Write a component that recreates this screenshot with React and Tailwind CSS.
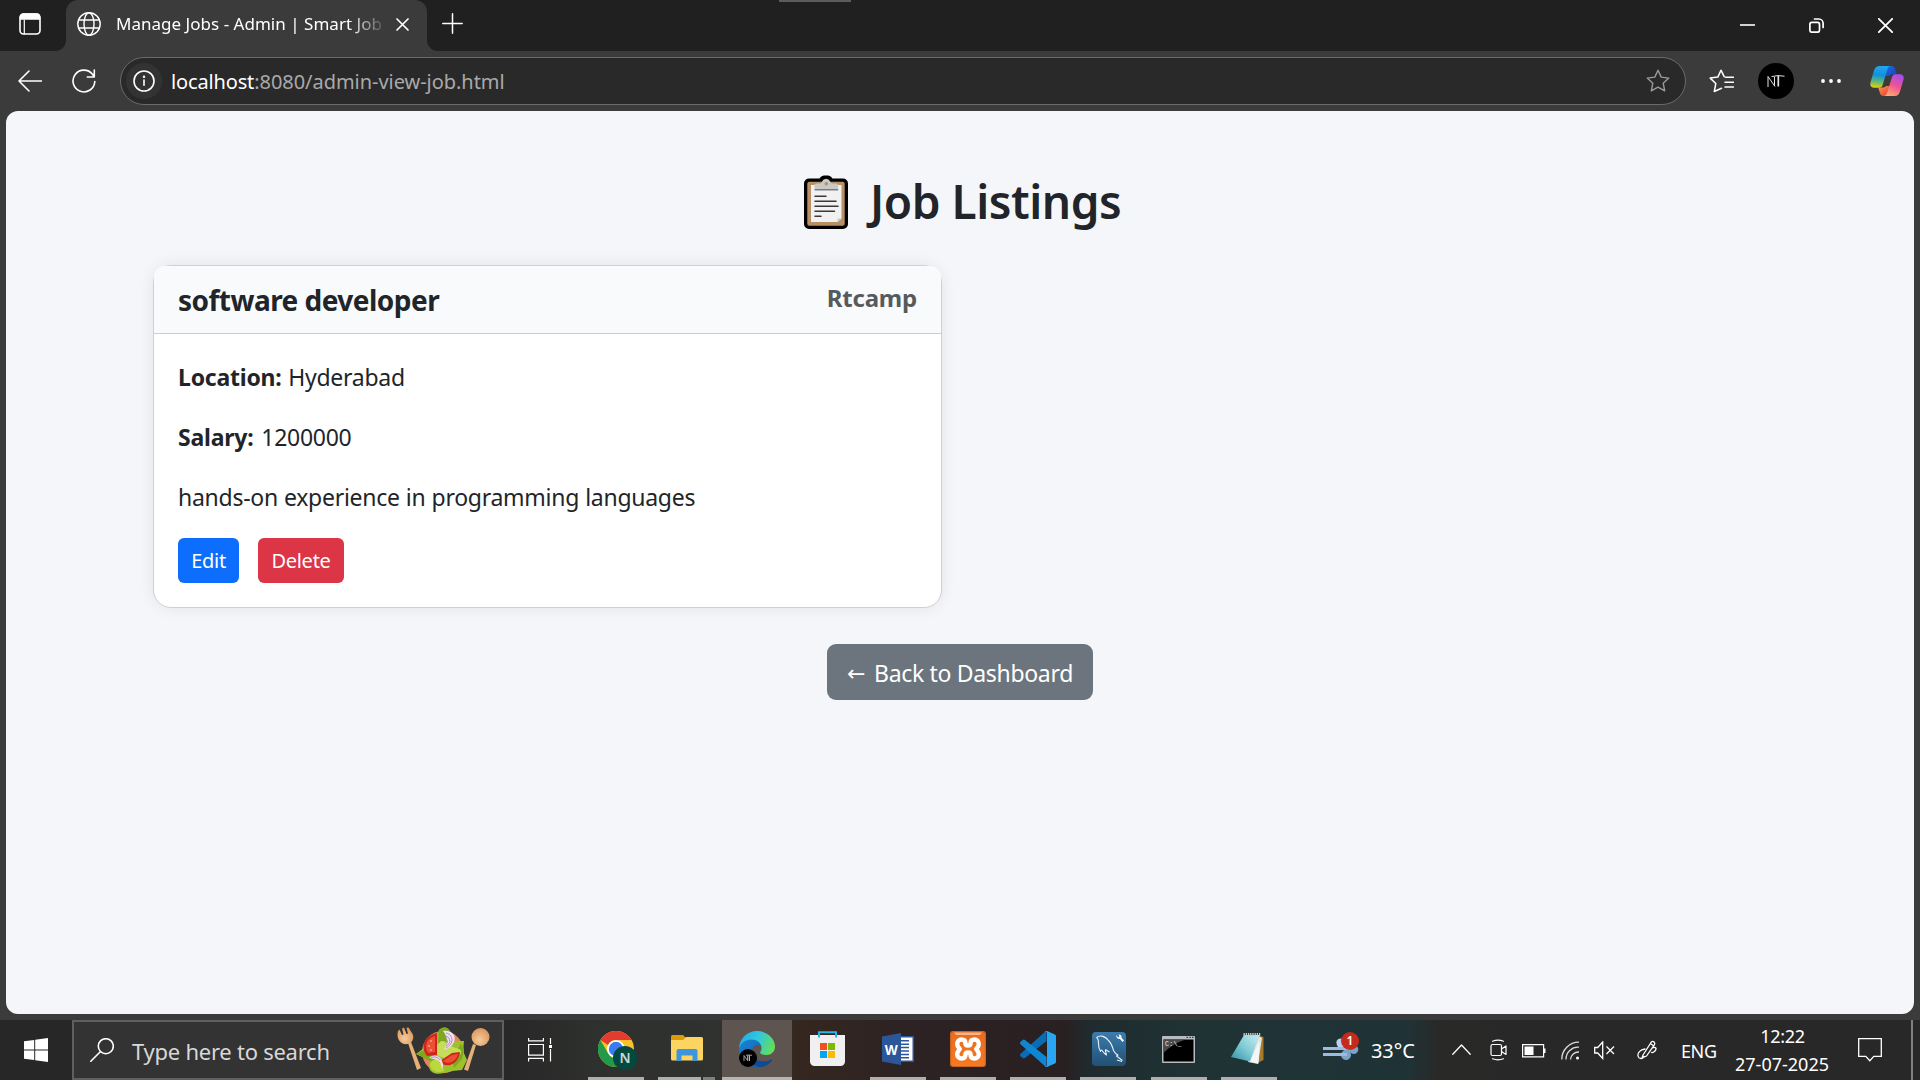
import React from 'react';

const line = { fill: 'none', stroke: 'currentColor', strokeLinecap: 'round', strokeLinejoin: 'round' };

function TabStrip() {
  return (
    <div className="flex h-[51px] shrink-0 bg-[#202020] text-white">
      <div className="flex w-[66px] rounded-br-[10px] bg-[#202020] pl-[19px] pt-[13px]">
        <svg width="22" height="22" viewBox="0 0 22 22" {...line} strokeWidth="1.6">
          <rect x="1" y="1" width="20" height="20" rx="3.5" />
          <path d="M1.5 6V4a3 3 0 0 1 3-3h13a3 3 0 0 1 3 3v2z" fill="currentColor" />
          <path d="M5.3 7v14" strokeWidth="1.2" />
        </svg>
      </div>
      <div className="relative flex w-[361px] items-start rounded-t-[12px] bg-[#3b3b3b] pl-[11px]">
        <span className="absolute bottom-0 -left-[10px] h-[10px] w-[10px] bg-[radial-gradient(circle_at_0_0,#202020_9.5px,#3b3b3b_10px)]" />
        <span className="absolute bottom-0 -right-[10px] h-[10px] w-[10px] bg-[radial-gradient(circle_at_100%_0,#202020_9.5px,#3b3b3b_10px)]" />
        <svg className="mt-[12px]" width="24" height="24" viewBox="0 0 24 24" {...line} strokeWidth="1.4">
          <circle cx="12" cy="12" r="11.2" />
          <ellipse cx="12" cy="12" rx="5" ry="11.2" />
          <path d="M2 8h20M2 16h20" />
        </svg>
        <div className="ml-[15px] mt-[10px] w-[270px] shrink-0 whitespace-nowrap text-[17px] leading-[27px] tracking-[0.02px] [mask-image:linear-gradient(to_right,#000_232px,transparent_272px)]">
          Manage Jobs - Admin | Smart Job
        </div>
        <svg className="ml-[10px] mt-[18px] shrink-0" width="13" height="13" viewBox="0 0 13 13" {...line} strokeWidth="1.7">
          <path d="M1 1l11 11M12 1L1 12" />
        </svg>
      </div>
      <svg className="ml-[15px] mt-[13px]" width="21" height="21" viewBox="0 0 21 21" {...line} strokeWidth="1.5">
        <path d="M10.5 .8v19.4M.8 10.5h19.4" />
      </svg>
      <div className="ml-[316px] h-[2px] w-[72px] bg-[#5c5c5c]" />
      <div className="ml-auto flex pr-[27px] pt-[18px]">
        <svg width="15" height="15" viewBox="0 0 15 15" {...line} strokeWidth="1.6"><path d="M0 7h15" strokeLinecap="butt" /></svg>
        <svg className="ml-[54px]" width="15" height="15" viewBox="0 0 15 15" {...line} strokeWidth="1.7">
          <rect x=".9" y="4.4" width="9.6" height="9.8" rx="2" />
          <path d="M5.5 1h4.3a4.3 4.3 0 0 1 4.3 4.3v4.2" />
        </svg>
        <svg className="ml-[54px]" width="15" height="15" viewBox="0 0 15 15" {...line} strokeWidth="1.8"><path d="M.8.8l13.4 13.4M14.2.8L.8 14.2" /></svg>
      </div>
    </div>
  );
}

const star = 'M12 1.2l3.2 6.9 7.6 1-5.6 5.1 1.5 7.7-6.7-3.8-6.7 3.8 1.5-7.7L1.2 9.1l7.6-1z';

function Copilot() {
  return (
    <svg className="ml-[29px]" width="34" height="30" viewBox="0 0 34 30">
      <defs>
        <linearGradient id="cpA" x1=".3" y1="0" x2=".2" y2="1"><stop offset="0" stopColor="#22a5f2" /><stop offset=".4" stopColor="#1190dc" /><stop offset=".7" stopColor="#5fb87a" /><stop offset="1" stopColor="#f3d000" /></linearGradient>
        <linearGradient id="cpB" x1=".7" y1="0" x2=".3" y2="1"><stop offset="0" stopColor="#a44df0" /><stop offset=".5" stopColor="#ee5390" /><stop offset="1" stopColor="#ffab70" /></linearGradient>
        <linearGradient id="cpC" x1="0" y1="0" x2="1" y2="1"><stop offset="0" stopColor="#1d6fe0" /><stop offset="1" stopColor="#1a3fc0" /></linearGradient>
        <linearGradient id="cpD" x1="0" y1="0" x2="1" y2="1"><stop offset="0" stopColor="#ff9a45" /><stop offset="1" stopColor="#e5323a" /></linearGradient>
      </defs>
      <path d="M17 0h4.500c2 0 3 1 3.600 3l1.700 5.500h-3.600c-2 0-3.200.3-4.200 1.500H15z" fill="url(#cpC)" />
      <path d="M18 30h-4.500c-2 0-3-1-3.600-3L8.200 21.500h3.600c2 0 3.200-.3 4.200-1.500h4z" fill="url(#cpD)" />
      <path d="M9.500 0H21c-2.200 0-3.100 1.500-3.700 3.500l-4.500 15c-.6 2.200-1.800 3.300-4 3.300H4.500C.8 21.800-.3 19.500.5 16.500L4 4.500C4.900 1.500 6.600 0 9.500 0z" fill="url(#cpA)" />
      <path d="M24.500 30H13.500c2.200 0 3.100-1.500 3.700-3.500l4.500-14.500c.6-2.200 1.800-3.800 4-3.800h3.800c3.700 0 4.800 2.300 4 5.300l-3.500 12C29.100 28.500 27.400 30 24.500 30z" fill="url(#cpB)" />
    </svg>
  );
}

function Toolbar() {
  return (
    <div className="flex h-[60px] shrink-0 items-center text-white">
      <svg className="ml-[18px]" width="24" height="22" viewBox="0 0 24 22" {...line} strokeWidth="1.6">
        <path d="M23.5 11H1M11 1L1 11l10 10" />
      </svg>
      <svg className="ml-[30px]" width="24" height="24" viewBox="0 0 24 24" {...line} strokeWidth="1.6">
        <path d="M22.8 12.5A10.9 10.9 0 1 1 20.5 5.3L22 7.5M22.3 1v7h-7" />
      </svg>
      <div className="ml-[24px] flex h-[48px] w-[1566px] items-center rounded-full border border-[#6a6a6a] bg-[#292929] pl-[5px] pr-[15px]">
        <div className="flex h-9 w-9 items-center justify-center rounded-full bg-[#333333]">
          <svg width="22" height="22" viewBox="0 0 22 22" {...line} strokeWidth="1.6">
            <circle cx="11" cy="11" r="10" />
            <path d="M11 10v5.3" /><circle cx="11" cy="6.8" r=".5" />
          </svg>
        </div>
        <div className="ml-[9px] flex-1 whitespace-nowrap pt-[2px] text-[20px] leading-[30px] tracking-[-0.04px] text-[#a9a9a9]">
          <span className="tracking-[-0.15px] text-white">localhost</span>:8080/admin-view-job.html
        </div>
        <svg className="text-[#9a9a9a]" width="24" height="24" viewBox="0 0 24 24" {...line} strokeWidth="1.4"><path d={star} /></svg>
      </div>
      <svg className="ml-[23px]" width="25" height="24" viewBox="0 0 25 24" {...line} strokeWidth="1.5">
        <path d="M12.5 19.3l-7.2 3.2 1.5-8L1.2 9.1l7.6-1L12 1.2l3.2 6.5M16.5 8.3h8M16 13.2h8.5M16 18h8.5" />
      </svg>
      <div className="ml-[24px] flex h-9 w-9 items-center justify-center rounded-full bg-black">
        <svg width="20" height="14" viewBox="0 0 20 14" fill="none" stroke="#e2e2e2" strokeWidth="1">
          <path d="M2 13V2.500M2 2.500l7 10M8.500 12V3M5.500 2.600Q12 .8 18.500 2.200" />
          <path d="M12.300 2v10.500" strokeWidth="1.700" />
        </svg>
      </div>
      <svg className="ml-[27px]" width="20" height="4" viewBox="0 0 20 4" fill="currentColor">
        <circle cx="2" cy="2" r="1.9" /><circle cx="10" cy="2" r="1.9" /><circle cx="18" cy="2" r="1.9" />
      </svg>
      <Copilot />
    </div>
  );
}

function Clipboard() {
  return (
    <svg width="44" height="54" viewBox="0 0 44 54">
      <path d="M5 3.500H15.500C17 1 19 .5 22 .5s5 .5 6.500 3H39a5 5 0 0 1 5 5V49a5 5 0 0 1-5 5H5a5 5 0 0 1-5-5V8.500a5 5 0 0 1 5-5z" fill="#000" />
      <rect x="3.300" y="6.800" width="37.400" height="44" rx="2" fill="#b98f66" />
      <path d="M7 10h30.500v33.500L33.500 47H7z" fill="#f1f1f1" />
      <path d="M37.500 43.500h-4V47z" fill="#c9c9c9" />
      <path d="M10.500 14V10q0-1.500 2-1.500H16c1 0 1.500-1 2-2a4.500 4.500 0 0 1 8.200 0c.5 1 1 2 2 2h4q2 0 2 1.500v4z" fill="#c8c8c8" />
      <path d="M10.500 14h23.700v1.500H10.500z" fill="#7c7c7c" />
      <circle cx="22.300" cy="8.800" r="1.800" fill="#b98f66" />
      <path d="M11 21.200h11M11 26.200h21M11 31.300h23M11 36.300h19.500M11 41.300h6" stroke="#3c373b" strokeWidth="1.500" strokeLinecap="round" />
    </svg>
  );
}

function JobCard() {
  return (
    <div className="ml-[147px] mt-[29px] h-[343px] w-[789px] shrink-0 rounded-[18px] border border-[#cfd0d2] bg-white shadow-[0_0_15px_rgba(0,0,0,0.08)]">
      <div className="flex h-[68px] justify-between rounded-t-[10px] border-b border-[#cbcdd0] bg-[#f8fafc] px-6">
        <h5 className="mt-[16px] text-[28px] font-bold leading-[36px] tracking-[-0.52px]">software developer</h5>
        <span className="mt-[14px] text-[24px] font-bold leading-[36px] tracking-[-0.2px] text-[#565a5e]">Rtcamp</span>
      </div>
      <div className="px-6 pt-[25px] text-[23px] leading-[36px] tracking-[-0.27px]">
        <p className="mb-6"><b className="mr-px font-bold tracking-[-0.22px]">Location:</b> Hyderabad</p>
        <p className="mb-6"><b className="mr-[2px] font-bold tracking-[-0.2px]">Salary:</b> 1200000</p>
        <p className="mb-[23px] [word-spacing:0.4px]">hands-on experience in programming languages</p>
        <div className="flex gap-[19px] text-[20px] leading-[45px] text-white">
          <button className="h-[45px] w-[61px] rounded-[6px] bg-[#0d6efd]">Edit</button>
          <button className="h-[45px] w-[86px] rounded-[6px] bg-[#dc3545]">Delete</button>
        </div>
      </div>
    </div>
  );
}

function Page() {
  return (
    <main className="mx-[6px] flex h-[903px] shrink-0 flex-col rounded-[12px] bg-[#f4f6fa] text-[#212529]">
      <div className="mt-[55px] flex h-[70px] items-center pl-[798px]">
        <div className="mt-px"><Clipboard /></div>
        <h2 className="ml-[22px] whitespace-nowrap text-[46px] font-semibold leading-[58px] tracking-[-0.45px]">Job Listings</h2>
      </div>
      <JobCard />
      <a className="mt-9 flex h-[56px] w-[266px] items-center self-center rounded-[9px] bg-[#6c757d] pl-[20px] pt-px text-[23px] tracking-[-0.27px] text-white">
        <span className="w-[27px] pt-[3px] font-['DejaVu_Sans',sans-serif] text-[22px] leading-[30px]">←</span>
        <span className="whitespace-nowrap leading-[36px] tracking-[-0.32px]">Back to Dashboard</span>
      </a>
    </main>
  );
}

function Salad() {
  return (
    <svg width="93" height="48" viewBox="0 0 93 48">
      <defs>
        <radialGradient id="wood" cx=".45" cy=".65" r=".6"><stop offset="0" stopColor="#f3cb9b" /><stop offset="1" stopColor="#dd9a61" /></radialGradient>
      </defs>
      <path d="M11 16l3-1 10 26-4 2z" fill="#e8b078" />
      <path d="M1 4l1.500-1.500L5 8l1.500-.5L5 1.500l2-1 2.500 6.500 1.500-.5L9.500.8l2-.3 2.500 4c3 4 3 7 .5 10.500-3 3-8 3-11 0S0 8 1 4z" fill="url(#wood)" />
      <path d="M76 17l3 1-8 26-4-1.500z" fill="#e8b078" />
      <circle cx="83.500" cy="10" r="9" fill="url(#wood)" />
      <ellipse cx="46" cy="25" rx="21" ry="21" fill="#e0875a" />
      <path d="M42 3c5-5 11-2 12 4v7h13l-1 10 4 9-5 10-10 1-8 2c-8 2-14 0-15-6l1-7-14-6 8-6 3-10 10-2z" fill="#9dc12c" />
      <path d="M42 3c5-5 11-2 12 4l-6 14-7-2zM19 27l12-6 12 10-10 3zM55 30l9-13 3 6-2 9-8 9z" fill="#7da81f" />
      <path d="M44 14c7 0 9 6 15 7s7 5 2 8-20 3-22-3 2-9 5-12z" fill="#c5dd58" />
      <path d="M33 38c1-5 6-7 11-5l3 11c-7 2-12 1-14-6z" fill="#bbd83c" />
      <path d="M40 6c-13 3-17 14-10 23l10-1z" fill="#cf2417" /><path d="M38 9c-9 3-11 10-7 17l7-1z" fill="#ec4f38" />
      <path d="M34 13v2M32 18v2M34 22v2" stroke="#ffd2a0" strokeWidth="1" />
      <path d="M43 34c4 8 18 5 20-9l-8 1z" fill="#cf2417" /><path d="M46 34c5 4 13 1 15-7l-6 1z" fill="#ec4f38" />
      <path d="M46 4c15-2 16 15 1 19 4-6 4-13-1-19z" fill="#efe2f2" />
      <path d="M49 6c8 2 8 11 0 15M49 9c5 2 5 8 0 10M49 12c2 1 2 4 0 5" fill="none" stroke="#a77ab2" strokeWidth=".9" />
      <path d="M32 31c4-4 10-3 12 1 2 3 3 7 1 10l-2-7c-3-3-7-3-11-4z" fill="#eadbf0" />
      <path d="M34 31c3-2 7-1 9 2" fill="none" stroke="#a77ab2" strokeWidth=".8" />
    </svg>
  );
}

function Chrome() {
  return (
    <svg width="40" height="40" viewBox="0 0 40 40" className="ml-[4px] mt-[4px]">
      <circle cx="18" cy="18" r="18" fill="#fbc02d" />
      <path d="M2.400 9A18 18 0 0 1 33.600 9H18a9 9 0 0 0-8 5z" fill="#e33b2e" />
      <path d="M2.400 9A18 18 0 0 0 18 36l8-13.500a9 9 0 0 1-15.800 0z" fill="#229a4a" />
      <circle cx="18" cy="18" r="9" fill="#fff" /><circle cx="18" cy="18" r="7.200" fill="#3a7cf0" />
      <circle cx="27" cy="27" r="12" fill="#04493f" />
      <text x="27" y="32" textAnchor="middle" fontSize="14" fontWeight="600" fill="#c7dbd6" fontFamily="Noto Sans, sans-serif">N</text>
    </svg>
  );
}

function Explorer() {
  return (
    <svg width="32" height="28" viewBox="0 0 32 28" className="mt-px">
      <path d="M0 1.500Q0 0 1.500 0H12l3 3-3 3H0z" fill="#dc9b07" />
      <path d="M0 5h12l3-3h15.500Q32 2 32 3.500V24q0 1.500-1.500 1.500h-29Q0 25.500 0 24z" fill="#fcd462" />
      <path d="M5.500 26V16q0-2 2-2h17q2 0 2 2v10h-5v-5.500h-11V26z" fill="#3d95dc" />
    </svg>
  );
}

function Edge() {
  return (
    <svg width="36" height="37" viewBox="0 0 36 37" className="mt-px">
      <defs>
        <linearGradient id="edA" x1="0" y1=".2" x2="1" y2=".5"><stop offset="0" stopColor="#2aa7e4" /><stop offset=".5" stopColor="#2fc7df" /><stop offset="1" stopColor="#62de5b" /></linearGradient>
        <linearGradient id="edB" x1="0" y1="0" x2="1" y2="1"><stop offset="0" stopColor="#1a86d8" /><stop offset="1" stopColor="#0f4f9e" /></linearGradient>
      </defs>
      <path d="M0 18C0 8 8 0 18 0s18 7.500 18 15.500c0 5.500-4 8.500-8.500 8.500-4 0-6.500-1.300-6.500-2.500 0-.8 1.500-1.500 1.500-4C22.500 13 18 10 13 10 6 10 1.500 14 0 18z" fill="url(#edA)" />
      <path d="M0 18c1.500-6 6.500-9.500 12-9.500 6 0 10 3.500 10.500 7.500-1-1.500-2.500-2-4.500-2-3 0-5 3-5 6.500 0 7 6 10 12 10 3.500 0 6-1.500 7-2 1 0 1.200.700.800 1.200A18 18 0 0 1 18 36C8 36 0 28 0 18z" fill="url(#edB)" />
      <path d="M13 20.500c0 7 6 10 12 10 3.500 0 6-1.500 7-2 1 0 1.200.700.800 1.200A17 17 0 0 1 20 36c-6-2-9-8-7-15.500z" fill="#114a94" />
      <circle cx="9" cy="27" r="9" fill="#000" />
      <path d="M5 30v-5.500l3.500 5V24.500M7 24.300q3-.6 6 0" fill="none" stroke="#ddd" strokeWidth=".7" />
      <path d="M10.300 24.300V30" stroke="#ddd" strokeWidth="1.100" />
    </svg>
  );
}

function Store() {
  return (
    <svg width="35" height="35" viewBox="0 0 35 35">
      <path d="M9 8V1.200h17V8" fill="none" stroke="#2bb4ea" strokeWidth="2" />
      <path d="M0 4h35v26.500a4.500 4.500 0 0 1-4.500 4.500h-26A4.500 4.500 0 0 1 0 30.500z" fill="#f0f0f1" />
      <path d="M9 6.500V4M26 6.500V4" stroke="#2bb4ea" strokeWidth="2" />
      <path d="M10 12h7v7h-7z" fill="#f25022" /><path d="M18 12h7v7h-7z" fill="#7fba00" />
      <path d="M10 20h7v7h-7z" fill="#00a4ef" /><path d="M18 20h7v7h-7z" fill="#ffb900" />
    </svg>
  );
}

function Word() {
  return (
    <svg width="32" height="32" viewBox="0 0 32 32">
      <path d="M17 3h15v26H17z" fill="#2b579a" /><path d="M17 4.500h13.500v23H17z" fill="#fff" />
      <path d="M18 7.800h9M18 11.200h9M18 14.600h9M18 18h9M18 21.400h9M18 24.800h9" stroke="#2b579a" strokeWidth="1.500" />
      <path d="M0 3.500L19 0v32L0 28.500z" fill="#2b579a" />
      <text x="9.300" y="21.500" textAnchor="middle" fontSize="14.500" fontWeight="700" fill="#fff" textLength="13" lengthAdjust="spacingAndGlyphs" fontFamily="Noto Sans, sans-serif">W</text>
    </svg>
  );
}

function Xampp() {
  return (
    <svg width="36" height="36" viewBox="0 0 36 36">
      <defs><linearGradient id="xa" x1="0" y1="0" x2="0" y2="1"><stop offset="0" stopColor="#e96b1f" /><stop offset="1" stopColor="#f57a22" /></linearGradient></defs>
      <rect width="36" height="36" rx="3" fill="#c9631f" /><rect x="1.200" y="1" width="33.600" height="34" rx="2.500" fill="url(#xa)" />
      <path d="M4 1.500h28l-2 2.500H6z" fill="#f9b48a" />
      <path d="M18 14.500c-1.500 0-2.500-.700-2.500-2 0-3-1.800-4-4-4-2.500 0-4.300 1.800-4.300 4.300 0 3 1.800 3.700 2.500 5.200-.7 1.500-2.500 2.700-2.500 5.200S9 27.500 11.500 27.500c2.200 0 4-1 4-4 0-1.300 1-2 2.500-2s2.500.7 2.500 2c0 3 1.800 4 4 4 2.500 0 4.300-1.800 4.300-4.300S27 19.500 26.300 18c.7-1.500 2.500-2.200 2.500-5.200 0-2.500-1.800-4.300-4.300-4.300-2.200 0-4 1-4 4 0 1.300-1 2-2.500 2z" fill="none" stroke="#fff" strokeWidth="4.400" />
    </svg>
  );
}

function VsCode() {
  return (
    <svg width="36" height="36" viewBox="0 0 36 36">
      <path d="M26.500 0v10L5 27q-1.200.800-2.300 0L.600 25.200q-1.200-1.200 0-2.400L25 .800z" fill="#0a6cb5" />
      <path d="M26.500 36V26L5 9q-1.200-.800-2.300 0L.600 10.800q-1.200 1.200 0 2.400L25 35.200z" fill="#0f86d2" />
      <path d="M27 0l8 3.600q1 .600 1 1.600v25.600q0 1-1 1.600L27 36q-1.500.300-2.500-1 2.500 1.500 2.500-1.500v-31q0-3-2.500-1.500Q25.500-.300 27 0z" fill="#2aa5f2" />
    </svg>
  );
}

function Workbench() {
  return (
    <svg width="34" height="34" viewBox="0 0 34 34" className="ml-px">
      <defs><linearGradient id="wb" x1="0" y1="0" x2="0" y2="1"><stop offset="0" stopColor="#3c7cad" /><stop offset="1" stopColor="#225075" /></linearGradient></defs>
      <rect width="34" height="34" rx="4" fill="url(#wb)" />
      <path d="M4.500 5.500c4-3 9-1 12 3 3 3 4 6 5 10 1 2 3 4 4.500 4.500l-1.500 1 6 4.500M4.500 5.500c2 1 2 3 2 6s0 5 2 8c.5-2 1-2 2-.500 1 1.500 2.500 3 4 4l-1-4c-.5-1.500.500-1.500 1.500-.500l2.500 1.500M25 28l5 1.500" fill="none" stroke="#eaf2f8" strokeWidth="1.100" strokeLinejoin="round" />
      <path d="M24.500 3a3 3 0 0 0 3.500 4l2.500 3 1.500-1.500-2.500-2.700a3 3 0 0 0-3-3.300l1 2-1.500 1z" fill="#fff" />
    </svg>
  );
}

function Cmd() {
  return (
    <svg width="33" height="27" viewBox="0 0 33 27" className="mt-px">
      <rect width="33" height="27" rx="1" fill="#b7bcc1" /><path d="M1.500 3.500h30v22h-30z" fill="#000" />
      <path d="M1.500 3.500h22Q10 8 1.500 17z" fill="#4a4a4a" />
      <path d="M24.500 1.300h1.500M27.500 1.300H29M30 1.300h1.500" stroke="#34414d" strokeWidth="1.200" />
      <text x="3" y="10" fontSize="6.500" fill="#eee" fontFamily="Liberation Mono, monospace" letterSpacing=".3">C:\_</text>
    </svg>
  );
}

function Notepad() {
  return (
    <svg width="33" height="32" viewBox="0 0 33 32" className="mr-[3px]">
      <defs><linearGradient id="np" x1="0" y1="1" x2="1" y2="0"><stop offset="0" stopColor="#2f8ea0" /><stop offset=".5" stopColor="#7fcbd6" /><stop offset="1" stopColor="#c9edf0" /></linearGradient></defs>
      <path d="M29 3l3.500 1v23l-6 3z" fill="#a77a2c" />
      <path d="M28 3l3 2-4 26-10-2z" fill="#e3e6e6" />
      <path d="M13 2h15.500L19 28.500 0 24z" fill="url(#np)" />
      <path d="M12.500 1.500h17" stroke="#c9c9c9" strokeWidth="3" strokeDasharray="1.300 .9" />
      <path d="M19 28.500L28.500 8l-1 22.500z" fill="#f4f6f6" />
    </svg>
  );
}

const apps = [
  { id: 'chrome', icon: <Chrome />, bar: true },
  { id: 'explorer', icon: <Explorer />, stacked: true },
  { id: 'edge', icon: <Edge />, active: true },
  { id: 'store', icon: <Store /> },
  { id: 'word', icon: <Word />, bar: true },
  { id: 'xampp', icon: <Xampp />, bar: true },
  { id: 'vscode', icon: <VsCode />, bar: true },
  { id: 'workbench', icon: <Workbench />, bar: true },
  { id: 'cmd', icon: <Cmd />, bar: true },
  { id: 'notepad', icon: <Notepad />, bar: true },
];

function AppTile({ app }) {
  return (
    <div className={app.active ? 'flex w-[70px] flex-col items-center bg-[#5e5551]' : 'flex w-[70px] flex-col items-center'}>
      <div className="flex h-[57px] items-center justify-center pb-[3px] pt-[3px]">{app.icon}</div>
      {app.bar && <div className="h-[3px] w-[56px] bg-[#b1aeab]" />}
      {app.active && <div className="h-[3px] w-full bg-[#b9b4b0]" />}
      {app.stacked && (
        <div className="flex h-[3px] w-[57px]">
          <div className="mr-[2px] w-[43px] bg-[#aeb0ad]" />
          <div className="w-[12px] bg-[#7e807d]" />
        </div>
      )}
    </div>
  );
}

function Taskbar() {
  return (
    <footer className="flex h-[60px] shrink-0 bg-[linear-gradient(90deg,#272727_0px,#272727_505px,#2e302d_590px,#30322f_720px,#35271f_800px,#2d2224_900px,#292022_1065px,#1f2b2e_1090px,#203234_1180px,#1f3337_1405px,#292927_1440px,#282828_1500px)] text-white">
      <svg className="ml-[24px] mt-[18px]" width="24" height="24" viewBox="0 0 24 24" fill="#fff">
        <path d="M0 3.300L10.200 1.900v9.600H0zM11.200 1.700L24 0v11.500H11.200zM0 12.500h10.200v9.600L0 20.700zM11.200 12.500H24V24l-12.800-1.700z" />
      </svg>
      <div className="ml-[24px] flex w-[432px] border-2 border-[#5f5f5f] bg-[#333333]">
        <svg className="ml-[16px] mt-[16px]" width="24" height="24" viewBox="0 0 24 24" {...line} strokeWidth="1.600">
          <circle cx="15.800" cy="8.200" r="7.500" /><path d="M10.300 13.700L.800 23.300" />
        </svg>
        <span className="ml-[18px] mt-[12px] w-[265px] whitespace-nowrap text-[22px] leading-[34px] tracking-[-0.25px] text-[#d8d8d8]">Type here to search</span>
        <div className="mt-[5px] h-[48px] w-[93px] shrink-0"><Salad /></div>
      </div>
      <svg className="ml-[24px] mt-[18px]" width="24" height="24" viewBox="0 0 24 24" fill="none" stroke="#fff" strokeWidth="1.200">
        <path d="M.600 0v2.900h14.800V0M.600 6.500h14.800v10.600H.600zM.600 23.500v-3.100h14.800v3.100M22.500 0v6M22.500 11v12.500" /><path d="M21 7h3v3h-3z" fill="#fff" stroke="none" />
      </svg>
      <div className="ml-[29px] flex w-[703px] gap-[0.3px] pl-[0.500px]">{apps.map((a) => <AppTile key={a.id} app={a} />)}</div>
      <svg className="ml-[39px] mt-[12px]" width="36" height="30" viewBox="0 0 36 30">
        <path d="M15 15c-4-6 0-10 5-8l5 9z" fill="#b9d0ee" />
        <path d="M26 13h5a4.500 4.500 0 1 1-4 7 5 5 0 1 1-7-1z" fill="#7ca4c8" />
        <path d="M0 16.500h26M0 22.500h24" stroke="#9dbbe0" strokeWidth="3" />
        <circle cx="27" cy="9" r="9" fill="#c42b1c" />
        <text x="27" y="13.300" textAnchor="middle" fontSize="12" fontWeight="600" fill="#fff" fontFamily="Noto Sans, sans-serif">1</text>
      </svg>
      <span className="ml-[12px] mt-[15px] w-[45px] whitespace-nowrap text-[20px] leading-[31px] tracking-[-0.1px]">33°C</span>
      <svg className="ml-[36px] mt-[24px]" width="19" height="11" viewBox="0 0 19 11" {...line} strokeWidth="1.300"><path d="M.800 10.200L9.500 1l8.700 9.200" /></svg>
      <svg className="ml-[19px] mt-[19px]" width="18" height="22" viewBox="0 0 18 22" {...line} strokeWidth="1.200">
        <rect x="1" y="5.500" width="10.500" height="11" rx="1.500" /><path d="M11.500 10l4.500-3v8.500l-4.500-3M2.500 2.200Q8 .200 13.500 2.200M2.500 19.800Q8 21.800 13.500 19.800" />
      </svg>
      <svg className="ml-[14px] mt-[24px]" width="24" height="14" viewBox="0 0 24 14" fill="none" stroke="#fff" strokeWidth="1.200">
        <path d="M.600.600h21v12.300H.600z" /><path d="M2.500 2.500h9v8.500h-9zM22 4.500h1.500v4.500H22z" fill="#fff" stroke="none" />
      </svg>
      <svg className="ml-[15px] mt-[21px]" width="19" height="20" viewBox="0 0 19 20" fill="none" stroke="#ddd" strokeWidth="1.300">
        <path d="M.800 18.500A17 17 0 0 1 18 1.200M5 18.500A12 12 0 0 1 18 6.200M9.500 18.500A8 8 0 0 1 18 11" /><circle cx="16.500" cy="17" r="1.500" fill="#fff" stroke="none" />
      </svg>
      <svg className="ml-[14px] mt-[21px]" width="21" height="19" viewBox="0 0 21 19" fill="none" stroke="#fff" strokeWidth="1.300">
        <path d="M.700 6.500h3l5-5.500v16.500l-5-5.500h-3zM12.500 5.500l7.500 7.500M20 5.500L12.500 13" />
      </svg>
      <svg className="ml-[22px] mt-[20px]" width="21" height="20" viewBox="0 0 21 20" {...line} strokeWidth="1.300">
        <path d="M6 15L14 2.500Q15.500.500 17 2t0 3.300L9.500 16 5 18zM14 4l2.500 1.800M15 8c4-1.500 5 .500 3 3-1 1-2 2-3.500 1.500M8 9C3 10 .500 13 1 16s5 3.500 6 .500" />
      </svg>
      <span className="ml-[23px] mt-[17px] w-[36px] text-[18px] leading-[28px] tracking-[-0.4px]">ENG</span>
      <div className="ml-[18px] w-[94px] whitespace-nowrap pt-[2px] text-center text-[18px] leading-[28px]">
        <div className="pl-px tracking-[-0.3px]">12:22</div>
        <div>27-07-2025</div>
      </div>
      <svg className="ml-[29px] mt-[18px]" width="24" height="24" viewBox="0 0 24 24" fill="none" stroke="#fff" strokeWidth="1.300">
        <path d="M.700.700h22.600v17.600h-7.500l-4 4.500-4-4.500H.700z" />
      </svg>
      <div className="ml-[29px] w-[2px] bg-[#808080]" />
    </footer>
  );
}

export default function App() {
  return (
    <div className="flex h-[1080px] w-[1920px] flex-col overflow-hidden bg-[#3b3b3b] font-['Noto_Sans','Open_Sans',sans-serif]">
      <TabStrip />
      <Toolbar />
      <Page />
      <div className="h-[6px] shrink-0" />
      <Taskbar />
    </div>
  );
}
